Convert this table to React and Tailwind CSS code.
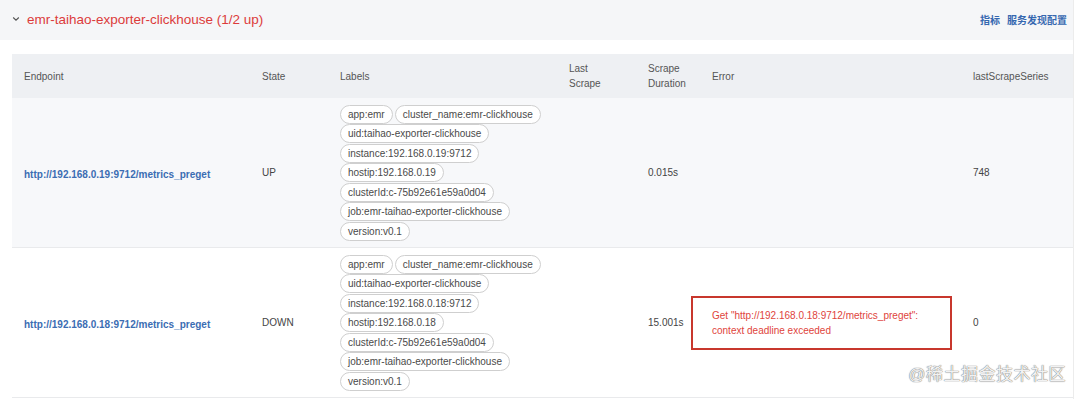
import { Fragment } from "react";

const COLS = "grid-cols-[238px_78px_229px_79px_64px_261px_103px]";

const targets = [
    {
        endpoint: "http://192.168.0.19:9712/metrics_preget",
        state: "UP",
        ip: "192.168.0.19",
        duration: "0.015s",
        error: null,
        series: "748",
    },
    {
        endpoint: "http://192.168.0.18:9712/metrics_preget",
        state: "DOWN",
        ip: "192.168.0.18",
        duration: "15.001s",
        error: ['Get "http://192.168.0.18:9712/metrics_preget":', "context deadline exceeded"],
        series: "0",
    },
];

const labelLines = (ip) => [
    ["app:emr", "cluster_name:emr-clickhouse"],
    ["uid:taihao-exporter-clickhouse"],
    [`instance:${ip}:9712`],
    [`hostip:${ip}`],
    ["clusterId:c-75b92e61e59a0d04"],
    ["job:emr-taihao-exporter-clickhouse"],
    ["version:v0.1"],
];

function Pill({ text }) {
    return (
        <span className="inline-flex items-center h-[19px] px-[7px] rounded-full border border-[#cfcfcf] bg-white text-[10px] text-[#4a4a4a] whitespace-nowrap">
            {text}
        </span>
    );
}

function Row({ t, striped }) {
    return (
        <div className={`grid ${COLS} items-center h-[150px] border-b border-[#e9eaec] ${striped ? "bg-[#f7f8fa]" : "bg-white"}`}>
            <div className="pl-3">
                <a className="text-[10px] font-semibold text-[#3b6db3] whitespace-nowrap">{t.endpoint}</a>
            </div>
            <div className="pl-3 text-[10px] text-[#444]">{t.state}</div>
            <div className="pl-3 flex flex-col gap-y-[0.5px]">
                {labelLines(t.ip).map((line, i) => (
                    <div key={i} className="flex gap-[2px]">
                        {line.map((l) => (
                            <Pill key={l} text={l} />
                        ))}
                    </div>
                ))}
            </div>
            <div className="pl-3"></div>
            <div className="pl-3 text-[10px] text-[#444]">{t.duration}</div>
            <div className="pl-3">
                {t.error && (
                    <div className="-ml-[21px] w-[261px] h-[54px] border-2 border-[#c8372d] pl-[19px] flex flex-col justify-center text-[10px] leading-[15px] text-[#e0443c] bg-white">
                        {t.error.map((e) => (
                            <span key={e} className="whitespace-nowrap">{e}</span>
                        ))}
                    </div>
                )}
            </div>
            <div className="pl-3 text-[10px] text-[#444]">{t.series}</div>
        </div>
    );
}

export default function App() {
    const headers = ["Endpoint", "State", "Labels", "Last Scrape", "Scrape Duration", "Error", "lastScrapeSeries"];
    return (
        <div className="relative w-[1080px] h-[399px] bg-white overflow-hidden font-['Liberation_Sans','Noto_Sans_CJK_SC',sans-serif]">
            <div className="w-[1074px] h-full border-r border-[#ececec]">
                <div className="flex items-center justify-between h-[40px] bg-[#f5f6f8] pl-[12px] pr-[6px]">
                    <div className="flex items-center gap-[7px]">
                        <svg width="8" height="6" viewBox="0 0 8 6" className="mt-[-2px]">
                            <path d="M1.2 1.5 L4 4.2 L6.8 1.5" fill="none" stroke="#555" strokeWidth="1.1" />
                        </svg>
                        <span className="text-[13.5px] text-[#dc3b3b]">emr-taihao-exporter-clickhouse (1/2 up)</span>
                    </div>
                    <div className="flex gap-[7px] text-[10px] font-semibold text-[#3568b0]">
                        <a>指标</a>
                        <a>服务发现配置</a>
                    </div>
                </div>
                <div className="pt-[14px] pl-[12px]">
                    <div className={`grid ${COLS} items-center h-[44px] bg-[#eef0f3] text-[10px] leading-[15px] text-[#555]`}>
                        {headers.map((h) => (
                            <div key={h} className="pl-3">
                                {h === "Last Scrape" ? (
                                    <Fragment>Last<br />Scrape</Fragment>
                                ) : h === "Scrape Duration" ? (
                                    <Fragment>Scrape<br />Duration</Fragment>
                                ) : (
                                    h
                                )}
                            </div>
                        ))}
                    </div>
                    {targets.map((t, i) => (
                        <Row key={t.endpoint} t={t} striped={i === 0} />
                    ))}
                </div>
            </div>
            <div className="absolute right-[14px] bottom-[12px] text-[17px] text-[#f2f2f2] [text-shadow:0_0_1px_#777,0_0_1px_#777] tracking-[0.5px]">
                @稀土掘金技术社区
            </div>
        </div>
    );
}
